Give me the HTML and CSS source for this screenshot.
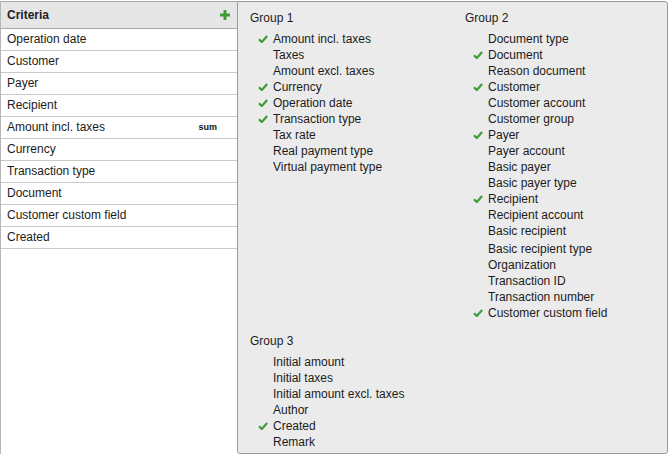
FILE: index.html
```html
<!DOCTYPE html>
<html>
<head>
<meta charset="utf-8">
<link rel="stylesheet" href="styles.css">
</head>
<body>
<div class="wrap">
  <div class="left">
    <div class="head">
      <span class="title">Criteria</span>
      <svg class="plus" width="10" height="10" viewBox="0 0 10 10"><path d="M5 0V10M0 5H10" stroke="#3e9b3b" stroke-width="3"/></svg>
    </div>
    <div class="row">Operation date</div>
    <div class="row">Customer</div>
    <div class="row">Payer</div>
    <div class="row">Recipient</div>
    <div class="row"><span>Amount incl. taxes</span><span class="sum">sum</span></div>
    <div class="row">Currency</div>
    <div class="row">Transaction type</div>
    <div class="row">Document</div>
    <div class="row">Customer custom field</div>
    <div class="row">Created</div>
  </div>
  <div class="right">
    <div class="groups">
      <div class="group">
        <div class="glabel">Group 1</div>
        <div class="item on">Amount incl. taxes</div>
        <div class="item">Taxes</div>
        <div class="item">Amount excl. taxes</div>
        <div class="item on">Currency</div>
        <div class="item on">Operation date</div>
        <div class="item on">Transaction type</div>
        <div class="item">Tax rate</div>
        <div class="item">Real payment type</div>
        <div class="item">Virtual payment type</div>
      </div>
      <div class="group">
        <div class="glabel">Group 2</div>
        <div class="item">Document type</div>
        <div class="item on">Document</div>
        <div class="item">Reason document</div>
        <div class="item on">Customer</div>
        <div class="item">Customer account</div>
        <div class="item">Customer group</div>
        <div class="item on">Payer</div>
        <div class="item">Payer account</div>
        <div class="item">Basic payer</div>
        <div class="item">Basic payer type</div>
        <div class="item on">Recipient</div>
        <div class="item">Recipient account</div>
        <div class="item">Basic recipient</div>
        <div class="item tall">Basic recipient type</div>
        <div class="item">Organization</div>
        <div class="item">Transaction ID</div>
        <div class="item">Transaction number</div>
        <div class="item on">Customer custom field</div>
      </div>
      <div class="group g3">
        <div class="glabel">Group 3</div>
        <div class="item">Initial amount</div>
        <div class="item">Initial taxes</div>
        <div class="item">Initial amount excl. taxes</div>
        <div class="item">Author</div>
        <div class="item on">Created</div>
        <div class="item">Remark</div>
      </div>
    </div>
  </div>
</div>
</body>
</html>
```
FILE: styles.css
```css
html, body {
  margin: 0;
  padding: 0;
  background: #fff;
}
body {
  font-family: "Liberation Sans", Arial, Helvetica, sans-serif;
  font-size: 12px;
  color: #1c1c1c;
}
.wrap {
  display: flex;
  margin-top: 1px;
  width: 668px;
  height: 453px;
}
.left {
  width: 237px;
  flex: none;
  background: #fff;
  border-left: 1px solid #b5b5b5;
  box-sizing: border-box;
}
.head {
  height: 28px;
  box-sizing: border-box;
  border-top: 1px solid #a8a8a8;
  border-bottom: 1px solid #a8a8a8;
  background: #e6e6e6;
  display: flex;
  align-items: center;
  justify-content: space-between;
  padding: 0 7px 0 6px;
}
.title {
  font-weight: bold;
  color: #222;
}
.plus {
  display: block;
  margin-top: -1px;
}
.row {
  height: 22px;
  box-sizing: border-box;
  border-bottom: 1px solid #c9c9c9;
  display: flex;
  align-items: center;
  justify-content: space-between;
  padding: 0 20px 0 6px;
  line-height: 21px;
}
.sum {
  font-size: 9px;
  font-weight: bold;
  color: #111;
}
.right {
  flex: 1;
  background: #ebebeb;
  border: 1px solid #9a9a9a;
  border-radius: 0 3px 3px 3px;
  box-sizing: border-box;
  padding: 8px 12px 0 12px;
}
.groups {
  display: grid;
  grid-template-columns: 215px 1fr;
  row-gap: 12px;
}
.glabel {
  line-height: 16px;
  margin-bottom: 5px;
}
.item {
  line-height: 16px;
  padding-left: 23px;
  position: relative;
}
.item.tall {
  margin-top: 2px;
}
.item.on::before {
  content: "";
  position: absolute;
  left: 8px;
  top: 4px;
  width: 10px;
  height: 8px;
  background: url("data:image/svg+xml;utf8,<svg xmlns='http://www.w3.org/2000/svg' width='10' height='8' viewBox='0 0 10 8'><path d='M1 4.2 L3.8 7 L9.2 1' fill='none' stroke='%233f9b3c' stroke-width='2.2'/></svg>") no-repeat;
}
.g3 {
  grid-column: 1 / 3;
}
```
